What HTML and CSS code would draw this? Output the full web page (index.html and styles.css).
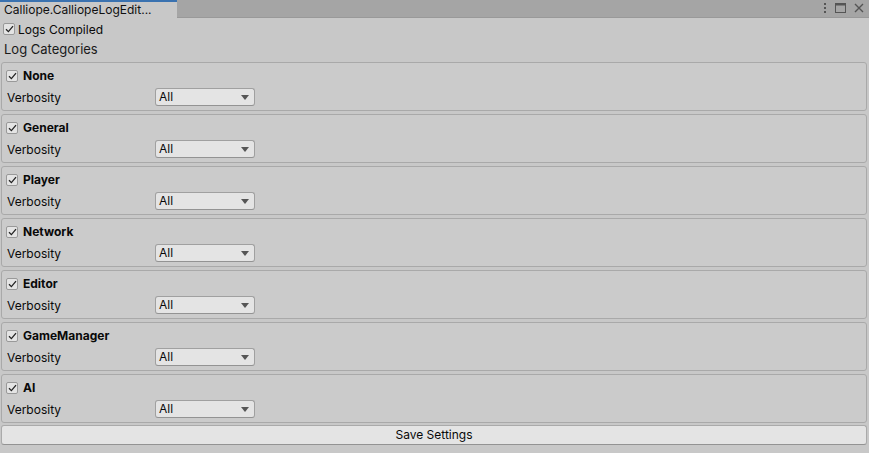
FILE: index.html
```html
<!DOCTYPE html>
<html>
<head>
<meta charset="utf-8">
<link rel="stylesheet" href="styles.css">
</head>
<body>
<div class="tabbar">
  <div class="tab">Calliope.CalliopeLogEdit...</div>
  <div class="tabbar-space"></div>
  <div class="win-icons">
    <svg width="4" height="10" viewBox="0 0 4 10"><rect x="1" y="0" width="2" height="2" fill="#555"/><rect x="1" y="4" width="2" height="2" fill="#555"/><rect x="1" y="8" width="2" height="2" fill="#555"/></svg>
    <svg width="11" height="10" viewBox="0 0 11 10"><rect x="0.5" y="0.5" width="10" height="9" fill="none" stroke="#555"/><rect x="0.5" y="0.5" width="10" height="2" fill="#555"/></svg>
    <svg width="10" height="10" viewBox="0 0 10 10"><path d="M1 1L9 9M9 1L1 9" stroke="#555" stroke-width="1.4"/></svg>
  </div>
</div>
<div class="content">
  <div class="toggle-row">
    <span class="check"><svg width="9" height="8" viewBox="0 0 9 8"><path d="M1 4.2L3.4 6.6L8 1.2" fill="none" stroke="#222" stroke-width="1.3"/></svg></span>
    <span class="label">Logs Compiled</span>
  </div>
  <div class="section-title">Log Categories</div>
  <div class="boxes">
    <div class="box">
      <div class="box-head"><span class="check"><svg width="9" height="8" viewBox="0 0 9 8"><path d="M1 4.2L3.4 6.6L8 1.2" fill="none" stroke="#222" stroke-width="1.3"/></svg></span><span class="name">None</span></div>
      <div class="field"><span class="field-label">Verbosity</span><span class="dropdown">All<span class="arrow"></span></span></div>
    </div>
    <div class="box">
      <div class="box-head"><span class="check"><svg width="9" height="8" viewBox="0 0 9 8"><path d="M1 4.2L3.4 6.6L8 1.2" fill="none" stroke="#222" stroke-width="1.3"/></svg></span><span class="name">General</span></div>
      <div class="field"><span class="field-label">Verbosity</span><span class="dropdown">All<span class="arrow"></span></span></div>
    </div>
    <div class="box">
      <div class="box-head"><span class="check"><svg width="9" height="8" viewBox="0 0 9 8"><path d="M1 4.2L3.4 6.6L8 1.2" fill="none" stroke="#222" stroke-width="1.3"/></svg></span><span class="name">Player</span></div>
      <div class="field"><span class="field-label">Verbosity</span><span class="dropdown">All<span class="arrow"></span></span></div>
    </div>
    <div class="box">
      <div class="box-head"><span class="check"><svg width="9" height="8" viewBox="0 0 9 8"><path d="M1 4.2L3.4 6.6L8 1.2" fill="none" stroke="#222" stroke-width="1.3"/></svg></span><span class="name">Network</span></div>
      <div class="field"><span class="field-label">Verbosity</span><span class="dropdown">All<span class="arrow"></span></span></div>
    </div>
    <div class="box">
      <div class="box-head"><span class="check"><svg width="9" height="8" viewBox="0 0 9 8"><path d="M1 4.2L3.4 6.6L8 1.2" fill="none" stroke="#222" stroke-width="1.3"/></svg></span><span class="name">Editor</span></div>
      <div class="field"><span class="field-label">Verbosity</span><span class="dropdown">All<span class="arrow"></span></span></div>
    </div>
    <div class="box">
      <div class="box-head"><span class="check"><svg width="9" height="8" viewBox="0 0 9 8"><path d="M1 4.2L3.4 6.6L8 1.2" fill="none" stroke="#222" stroke-width="1.3"/></svg></span><span class="name">GameManager</span></div>
      <div class="field"><span class="field-label">Verbosity</span><span class="dropdown">All<span class="arrow"></span></span></div>
    </div>
    <div class="box">
      <div class="box-head"><span class="check"><svg width="9" height="8" viewBox="0 0 9 8"><path d="M1 4.2L3.4 6.6L8 1.2" fill="none" stroke="#222" stroke-width="1.3"/></svg></span><span class="name">AI</span></div>
      <div class="field"><span class="field-label">Verbosity</span><span class="dropdown">All<span class="arrow"></span></span></div>
    </div>
  </div>
  <div class="button">Save Settings</div>
</div>
</body>
</html>
```

FILE: styles.css
```css
* { box-sizing: border-box; }
html, body {
  margin: 0;
  padding: 0;
  width: 869px;
  height: 453px;
  overflow: hidden;
  background: #c8c8c8;
  font-family: Inter, "Noto Sans", sans-serif;
  font-size: 12px;
  color: #090909;
}
.tabbar {
  display: flex;
  height: 18px;
  background: #a5a5a5;
  border-bottom: 1px solid #999;
}
.tab {
  width: 177px;
  height: 18px;
  background: #c8c8c8;
  border-top: 2px solid #3a72b0;
  padding-left: 4px;
  line-height: 15px;
  font-size: 12px;
  color: #101010;
  white-space: nowrap;
}
.tabbar-space { flex: 1; }
.win-icons {
  display: flex;
  align-items: center;
  gap: 8px;
  padding-right: 5px;
  padding-bottom: 2px;
}
.content {
  padding: 3px 2px 0 1px;
}
.toggle-row {
  display: flex;
  align-items: center;
  height: 16px;
  padding-left: 2px;
}
.check {
  width: 12px;
  height: 12px;
  border: 1px solid #999;
  border-radius: 2px;
  background: #e4e4e4;
  display: inline-flex;
  align-items: center;
  justify-content: center;
  flex: none;
}
.label { margin-left: 3px; }
.section-title {
  margin-top: 2px;
  height: 20px;
  line-height: 20px;
  padding-left: 3px;
  font-size: 13px;
  color: #1a1a1a;
}
.boxes {
  display: flex;
  flex-direction: column;
  gap: 3px;
  margin-top: 3px;
}
.box {
  height: 49px;
  border: 1px solid #a9a9a9;
  border-radius: 3px;
  background: #cbcbcb;
  padding: 4px 4px 0 4px;
}
.box-head {
  display: flex;
  align-items: center;
  height: 17px;
}
.name {
  margin-left: 5px;
  font-weight: 700;
}
.field {
  display: flex;
  align-items: center;
  height: 20px;
  margin-top: 3px;
}
.field-label {
  width: 149px;
  padding-left: 1px;
}
.dropdown {
  position: relative;
  width: 100px;
  height: 18px;
  line-height: 16px;
  background: #e4e4e4;
  border: 1px solid #a0a0a0;
  border-bottom-color: #939393;
  border-radius: 3px;
  padding-left: 3px;
}
.arrow {
  position: absolute;
  right: 5px;
  top: 6px;
  width: 0;
  height: 0;
  border-left: 4px solid transparent;
  border-right: 4px solid transparent;
  border-top: 5px solid #555;
}
.button {
  margin-top: 2px;
  height: 20px;
  line-height: 18px;
  text-align: center;
  background: #e4e4e4;
  border: 1px solid #aaa;
  border-bottom-color: #939393;
  border-radius: 3px;
}
```
